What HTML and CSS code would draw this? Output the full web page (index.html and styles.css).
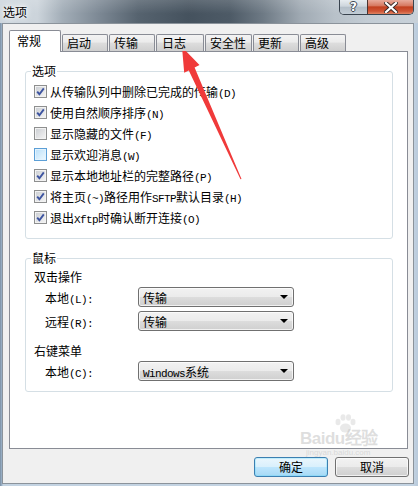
FILE: index.html
```html
<!DOCTYPE html>
<html lang="zh-CN">
<head>
<meta charset="utf-8">
<title>选项</title>
<link rel="stylesheet" href="styles.css">
</head>
<body>
<div class="window">
  <div class="titlebar">
    <span class="title">选项</span>
    <div class="cbtns">
      <div class="cbtn help">?</div>
      <div class="cbtn close">
        <svg width="14" height="11" viewBox="0 0 14 11"><path d="M2 1 L12 10 M12 1 L2 10" stroke="#3a2a28" stroke-width="4" stroke-linecap="square"/><path d="M2 1 L12 10 M12 1 L2 10" stroke="#fff" stroke-width="2.2" stroke-linecap="square"/></svg>
      </div>
    </div>
  </div>
  <div class="client">
    <div class="tabs">
      <div class="tab active">常规</div>
      <div class="tab">启动</div>
      <div class="tab">传输</div>
      <div class="tab wide">日志</div>
      <div class="tab mid">安全性</div>
      <div class="tab">更新</div>
      <div class="tab">高级</div>
    </div>
    <div class="panel">
      <fieldset class="group g1">
        <legend>选项</legend>
        <div class="cb-row"><span class="cb checked"><svg viewBox="0 0 11 11" width="11" height="11"><path d="M2.2 5.6 L4.4 8.2 L8.8 2.4" fill="none" stroke="#3d54a0" stroke-width="1.9"/></svg></span><span>从传输队列中删除已完成的传输<span class="m">(D)</span></span></div>
        <div class="cb-row"><span class="cb checked"><svg viewBox="0 0 11 11" width="11" height="11"><path d="M2.2 5.6 L4.4 8.2 L8.8 2.4" fill="none" stroke="#3d54a0" stroke-width="1.9"/></svg></span><span>使用自然顺序排序<span class="m">(N)</span></span></div>
        <div class="cb-row"><span class="cb"></span><span>显示隐藏的文件<span class="m">(F)</span></span></div>
        <div class="cb-row"><span class="cb hover"></span><span>显示欢迎消息<span class="m">(W)</span></span></div>
        <div class="cb-row"><span class="cb checked"><svg viewBox="0 0 11 11" width="11" height="11"><path d="M2.2 5.6 L4.4 8.2 L8.8 2.4" fill="none" stroke="#3d54a0" stroke-width="1.9"/></svg></span><span>显示本地地址栏的完整路径<span class="m">(P)</span></span></div>
        <div class="cb-row"><span class="cb checked"><svg viewBox="0 0 11 11" width="11" height="11"><path d="M2.2 5.6 L4.4 8.2 L8.8 2.4" fill="none" stroke="#3d54a0" stroke-width="1.9"/></svg></span><span>将主页<span class="m">(~)</span>路径用作<span class="m">SFTP</span>默认目录<span class="m">(H)</span></span></div>
        <div class="cb-row"><span class="cb checked"><svg viewBox="0 0 11 11" width="11" height="11"><path d="M2.2 5.6 L4.4 8.2 L8.8 2.4" fill="none" stroke="#3d54a0" stroke-width="1.9"/></svg></span><span>退出<span class="m">Xftp</span>时确认断开连接<span class="m">(O)</span></span></div>
      </fieldset>
      <fieldset class="group g2">
        <legend>鼠标</legend>
        <div class="heading">双击操作</div>
        <div class="field"><span class="flabel">本地<span class="m">(L):</span></span><div class="combo"><span>传输</span><span class="drop"></span></div></div>
        <div class="field"><span class="flabel">远程<span class="m">(R):</span></span><div class="combo"><span>传输</span><span class="drop"></span></div></div>
        <div class="heading h2">右键菜单</div>
        <div class="field"><span class="flabel">本地<span class="m">(C):</span></span><div class="combo"><span><span class="m">Windows</span>系统</span><span class="drop"></span></div></div>
      </fieldset>
    </div>
    <div class="buttons">
      <button class="btn default">确定</button>
      <button class="btn">取消</button>
    </div>
  </div>
  <div class="watermark">
    <svg class="paw" width="26" height="20" viewBox="0 0 26 20"><ellipse cx="6" cy="8" rx="2.5" ry="3.2"/><ellipse cx="11" cy="3.5" rx="2.5" ry="3.2"/><ellipse cx="16.5" cy="3.5" rx="2.5" ry="3.2"/><ellipse cx="21" cy="8" rx="2.5" ry="3.2"/><ellipse cx="13.5" cy="14" rx="5.5" ry="4.5"/></svg>
    <div class="wm-text">Baidu经验</div>
    <div class="wm-url">jingyan.baidu.com</div>
  </div>
  <svg class="arrow" width="418" height="486" viewBox="0 0 418 486">
    <polygon points="182,47 199.5,65 194.6,67.4 241.5,179 240.5,179.3 188.8,70.6 184.2,72.8" fill="#f03a3a"/>
  </svg>
</div>
</body>
</html>
```

FILE: styles.css
```css
* { box-sizing: border-box; }
html, body { margin: 0; padding: 0; }
body {
  width: 418px;
  height: 486px;
  overflow: hidden;
  font-family: "Noto Sans CJK SC", "Noto Sans CJK JP", sans-serif;
  font-size: 12px;
  color: #000;
  background: #c6d6e6;
}
.m {
  font-family: "Liberation Mono", monospace;
  font-size: 11px;
  letter-spacing: -0.6px;
}

.window {
  position: relative;
  width: 418px;
  height: 486px;
  display: flex;
  flex-direction: column;
  background: linear-gradient(to right, #7a8ea3 0, #9fb6cc 2px, #c3d3e2 3px, #c3d3e2 413px, #b9cadb 418px);
}

.titlebar {
  height: 23px;
  flex: none;
  display: flex;
  justify-content: space-between;
  align-items: flex-start;
  background:
    linear-gradient(to bottom, rgba(255,255,255,0.15), rgba(255,255,255,0) 60%),
    linear-gradient(to right, #cdd6de 0%, #ccd4db 9%, #a2adb7 15%, #7b8793 24%, #56636f 33%, #45525e 45%, #4d5a66 55%, #6e7a85 63%, #a0aab3 72%, #b8c1c9 80%, #c3ccd4 88%, #c8d1d9 100%);
}
.title {
  padding: 4px 0 0 3px;
  line-height: 15px;
  font-size: 12px;
  text-shadow: 0 0 3px #fff, 0 0 6px #fff, 0 0 10px #fff;
}
.cbtns {
  display: flex;
  height: 15px;
  margin-right: 4px;
  border: 1px solid #39434e;
  border-top: none;
  border-radius: 0 0 5px 5px;
  overflow: hidden;
}
.cbtn {
  height: 100%;
  display: flex;
  align-items: center;
  justify-content: center;
}
.help {
  width: 27px;
  background: linear-gradient(to bottom, #e7ecf0 0%, #cdd5dc 45%, #b3bec8 50%, #c2ccd5 100%);
  color: #fff;
  font-family: "DejaVu Sans", sans-serif;
  font-weight: bold;
  font-size: 12px;
  line-height: 12px;
  text-shadow: 1px 0 0 #3d4853, -1px 0 0 #3d4853, 0 1px 0 #3d4853, 0 -1px 0 #3d4853;
}
.close {
  width: 46px;
  border-left: 1px solid #4b3430;
  background: linear-gradient(to bottom, #e8ab9c 0%, #d77a62 40%, #c2401f 50%, #cf5536 80%, #df8463 100%);
}

.client {
  flex: none;
  width: 412px;
  height: 461px;
  margin-left: 2px;
  background: #f0f0f0;
  border: 1px solid #8b939b;
  display: flex;
  flex-direction: column;
}

.tabs {
  display: flex;
  align-items: flex-end;
  margin: 6px 0 0 6px;
  height: 21px;
  position: relative;
  z-index: 1;
}
.tab {
  width: 46px;
  height: 17px;
  margin-left: 1px;
  padding: 0 0 0 4px;
  border: 1px solid #898c95;
  border-bottom: none;
  border-radius: 2px 2px 0 0;
  background: linear-gradient(to bottom, #f3f3f3 0%, #ebebeb 45%, #dddddd 50%, #cfcfcf 100%);
  line-height: 16px;
  white-space: nowrap;
}
.tab.wide { width: 48px; padding-left: 5px; }
.tab.mid { width: 47px; }
.tab.active {
  width: 52px;
  height: 22px;
  margin-left: 0;
  margin-bottom: -1px;
  padding-left: 7px;
  background: #fff;
  line-height: 20px;
}

.panel {
  width: 399px;
  height: 398px;
  margin-left: 6px;
  background: #fff;
  border: 1px solid #898c95;
  padding-top: 12px;
}

.group {
  margin: 0 0 0 15px;
  width: 368px;
  padding: 0 0 10px 0;
  border: 1px solid #d5dfe5;
  border-radius: 3px;
  min-inline-size: 0;
}
.group legend {
  margin-left: 5px;
  padding: 0 1px;
  line-height: 14px;
  height: 14px;
}
.g1 { padding-top: 3px; }
.g2 { margin-top: 12px; padding-top: 2px; }

.cb-row {
  height: 21px;
  display: flex;
  align-items: center;
  padding-left: 8px;
  white-space: nowrap;
}
.cb {
  width: 13px;
  height: 13px;
  flex: none;
  margin-right: 3px;
  border: 1px solid #8e8f8f;
  background: linear-gradient(135deg, #c9cdd2 0%, #e2e3e5 55%, #f6f6f6 100%);
  box-shadow: inset 0 0 0 1px #f2f2f2;
  display: flex;
  align-items: center;
  justify-content: center;
}
.cb svg { display: block; }
.cb.hover {
  border-color: #5c9fd6;
  background: linear-gradient(135deg, #b8defa 0%, #d7eefc 55%, #eef8ff 100%);
  box-shadow: inset 0 0 0 1px #e3f3fe;
}

.heading {
  height: 20px;
  line-height: 20px;
  padding-left: 8px;
}
.heading.h2 { margin-top: 10px; }
.field {
  height: 20px;
  display: flex;
  align-items: center;
  padding-left: 19px;
}
.field + .field { margin-top: 4px; }
.flabel { width: 93px; flex: none; white-space: nowrap; }
.combo {
  width: 156px;
  height: 20px;
  border: 1px solid #707070;
  border-radius: 3px;
  background: linear-gradient(to bottom, #f2f2f2 0%, #ebebeb 50%, #dddddd 50%, #cfcfcf 100%);
  box-shadow: inset 0 0 0 1px rgba(255,255,255,0.7);
  display: flex;
  align-items: center;
  padding-left: 4px;
  white-space: nowrap;
}
.drop {
  margin-left: auto;
  margin-right: 5px;
  width: 0;
  height: 0;
  border-left: 4px solid transparent;
  border-right: 4px solid transparent;
  border-top: 4px solid #000;
}

.buttons {
  display: flex;
  justify-content: flex-end;
  gap: 7px;
  margin-top: 8px;
  padding-right: 4px;
}
.btn {
  width: 74px;
  height: 20px;
  padding: 0;
  margin: 0;
  font-family: inherit;
  font-size: 12px;
  line-height: 18px;
  color: #000;
  border: 1px solid #707070;
  border-radius: 3px;
  background: linear-gradient(to bottom, #f2f2f2 0%, #ebebeb 50%, #dddddd 50%, #cfcfcf 100%);
  box-shadow: inset 0 0 0 1px rgba(255,255,255,0.7);
}
.btn.default {
  border-color: #3c7fb1;
  background: linear-gradient(to bottom, #eaf6fd 0%, #d9f0fc 50%, #bee6fd 50%, #a7d9f5 100%);
  box-shadow: inset 0 0 0 1px #48d8fb40;
}

.watermark {
  position: absolute;
  left: 300px;
  top: 414px;
  width: 100px;
  height: 44px;
  pointer-events: none;
  color: rgba(200, 200, 200, 0.6);
}
.paw { position: absolute; left: 32px; top: 0; fill: rgba(215, 215, 215, 0.55); }
.wm-text {
  position: absolute;
  left: 0;
  top: 16px;
  font-family: "Liberation Sans", sans-serif;
  font-size: 17px;
  line-height: 18px;
  font-weight: bold;
  white-space: nowrap;
  letter-spacing: -0.5px;
}
.wm-url {
  position: absolute;
  left: 6px;
  top: 35px;
  font-family: "Liberation Sans", sans-serif;
  font-size: 8px;
  line-height: 8px;
  white-space: nowrap;
}

.arrow {
  position: absolute;
  left: 0;
  top: 0;
  pointer-events: none;
}
```
